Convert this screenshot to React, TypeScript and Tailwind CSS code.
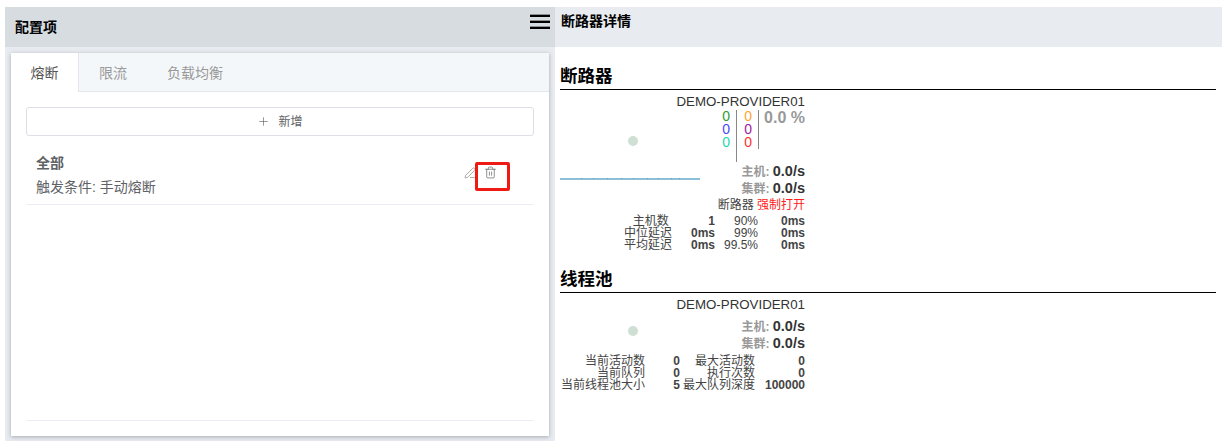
import { Plus, Trash2, PenLine } from "lucide-react";

const font = "font-['Liberation_Sans','Noto_Sans_CJK_SC',sans-serif]";

const breakerStats = [
  ["主机数 ", "1", "90%", "0ms"],
  ["中位延迟", "0ms", "99%", "0ms"],
  ["平均延迟", "0ms", "99.5%", "0ms"],
];

const poolStats = [
  ["当前活动数", "0", "最大活动数", "0"],
  ["当前队列", "0", "执行次数", "0"],
  ["当前线程池大小", "5", "最大队列深度", "100000"],
];

const ticks = [21, 33, 47, 61, 73, 87, 98, 111, 119];

const Rate = ({ label, value }: { label: string; value: string }) => (
  <div className="h-[17px] text-right leading-[17px]">
    <span className="text-[12px] font-bold text-[#999]">{label}: </span>
    <span className="text-[14.5px] font-bold text-[#333]">{value}</span>
  </div>
);

const StatRow = ({ row, cols }: { row: string[]; cols: string }) => (
  <div className={`grid ${cols} h-3 text-right text-[12px] leading-3 text-[#444]`}>
    <span className="whitespace-pre">{row[0]}</span>
    <span className="font-bold">{row[1]}</span>
    <span className="whitespace-nowrap">{row[2]}</span>
    <span className="font-bold">{row[3]}</span>
  </div>
);

const Circle = ({ className }: { className: string }) => (
  <div className={`absolute left-[68px] size-[10px] rounded-full bg-[#cfdfd3] ${className}`} />
);

export default function App() {
  return (
    <div className={`${font} flex h-[441px] w-[1229px] overflow-hidden bg-white pt-[7px] pr-[7px] pl-[5px]`}>
      {/* config panel */}
      <div className="relative flex w-[550px] flex-none flex-col bg-[#e8ebef]">
        <div className="flex h-10 flex-none items-center bg-[#d7dce1] pl-[10px] text-[14px] font-bold text-black">配置项</div>
        <div className="absolute top-2 left-[525px] flex w-5 flex-col gap-1">
          <span className="h-[2px] bg-black shadow-[0_-1px_0_#8a8f94]" />
          <span className="h-[2px] bg-black shadow-[0_-1px_0_#8a8f94]" />
          <span className="h-[2px] bg-black shadow-[0_-1px_0_#8a8f94]" />
        </div>
        <div className="mx-[6px] mt-[6px] flex h-[383px] flex-col bg-white shadow-[0_1px_4px_rgba(120,130,145,0.6)]">
          <div className="flex h-[39px] flex-none border-b border-[#e4e7ed] bg-[#f4f7fa] text-[14px] text-[#999]">
            <div className="-mb-px flex w-[68px] items-center justify-center border-r border-[#e4e7ed] bg-white pt-[2px] text-[#555]">熔断</div>
            <div className="flex w-[68px] items-center justify-center pt-[2px]">限流</div>
            <div className="flex w-[96px] items-center justify-center pt-[2px]">负载均衡</div>
          </div>
          <div className="flex flex-1 flex-col px-[15px] pt-[15px] pb-[15px]">
            <div className="flex h-[29px] flex-none items-center justify-center gap-2 rounded-[3px] border border-[#dcdfe6] text-[12px] text-[#606266]">
              <Plus size={13} strokeWidth={1.2} />
              新增
            </div>
            <div className="relative flex h-[69px] flex-none flex-col border-b border-[#ebeef5] pt-[19px] pl-[10px] text-[14px] text-[#606266]">
              <span className="h-[22px] leading-[16px] font-bold">全部</span>
              <span className="leading-[20px]">触发条件: 手动熔断</span>
              <div className="absolute top-[30px] right-[37px] flex items-center gap-[8px]">
                <PenLine size={12} strokeWidth={1.2} className="text-[#777]" />
                <Trash2 size={13} strokeWidth={1.2} className="text-[#555]" />
              </div>
              <div className="absolute top-[26px] left-[449px] h-[29px] w-[35px] rounded-[2px] border-[3px] border-[#f01a14]" />
            </div>
            <div className="flex-1" />
            <div className="border-b border-[#ebeef5]" />
          </div>
        </div>
      </div>

      {/* breaker detail */}
      <div className="flex flex-1 flex-col">
        <div className="h-10 flex-none bg-[#e8ebef] pl-[6px] text-[14px] leading-[29px] font-bold text-black">断路器详情</div>
        <div className="pr-[6px] pl-[5px]">
          <h2 className="mt-[18px] h-[25px] border-b border-black text-[17.5px] leading-[22px] font-bold text-black">断路器</h2>
          <div className="relative w-[245px]">
            <div className="h-[20px] text-right text-[13.3px] leading-[23px] text-[#333]">DEMO-PROVIDER01</div>
            <Circle className="top-[46px]" />
            <svg className="absolute top-[88px] left-0" width="140" height="2">
              <rect width="140" height="2" fill="#8cc0d8" />
              {ticks.map((x) => (
                <rect key={x} x={x} width="1" height="1" fill="#6f9fb8" />
              ))}
            </svg>
            <div className="flex h-[52px] justify-end text-[14px] leading-[13px]">
              <div className="flex w-[12px] flex-col items-end">
                <span className="text-[#2ca02c]">0</span>
                <span className="text-[#4a4aff]">0</span>
                <span className="text-[#1fd6b0]">0</span>
              </div>
              <div className="mx-[6px] w-px bg-[#888]" />
              <div className="flex w-[10px] flex-col items-end pr-[1px]">
                <span className="text-[#ffa52e]">0</span>
                <span className="text-[#a020a0]">0</span>
                <span className="text-[#ff3030]">0</span>
              </div>
              <div className="mx-[5px] h-[39px] w-px bg-[#888]" />
              <span className="w-[41px] text-right text-[16px] leading-[15px] font-bold whitespace-nowrap text-[#999]">0.0 %</span>
            </div>
            <Rate label="主机" value="0.0/s" />
            <Rate label="集群" value="0.0/s" />
            <div className="mt-px h-[17px] text-right text-[12px] leading-[17px] text-[#444]">
              断路器 <span className="text-[#ff2020]">强制打开</span>
            </div>
            <div className="mt-[1px]">
              {breakerStats.map((row) => (
                <StatRow key={row[0]} row={row} cols="grid-cols-[112px_43px_43px_47px]" />
              ))}
            </div>
          </div>

          <h2 className="mt-[17px] h-[25px] border-b border-black text-[17.5px] leading-[22px] font-bold text-black">线程池</h2>
          <div className="relative w-[245px]">
            <div className="h-[24px] text-right text-[13.3px] leading-[23px] text-[#333]">DEMO-PROVIDER01</div>
            <Circle className="top-[33px]" />
            <Rate label="主机" value="0.0/s" />
            <Rate label="集群" value="0.0/s" />
            <div className="mt-[4px]">
              {poolStats.map((row) => (
                <StatRow key={row[0]} row={row} cols="grid-cols-[85px_35px_75px_50px]" />
              ))}
            </div>
          </div>
        </div>
      </div>
    </div>
  );
}
